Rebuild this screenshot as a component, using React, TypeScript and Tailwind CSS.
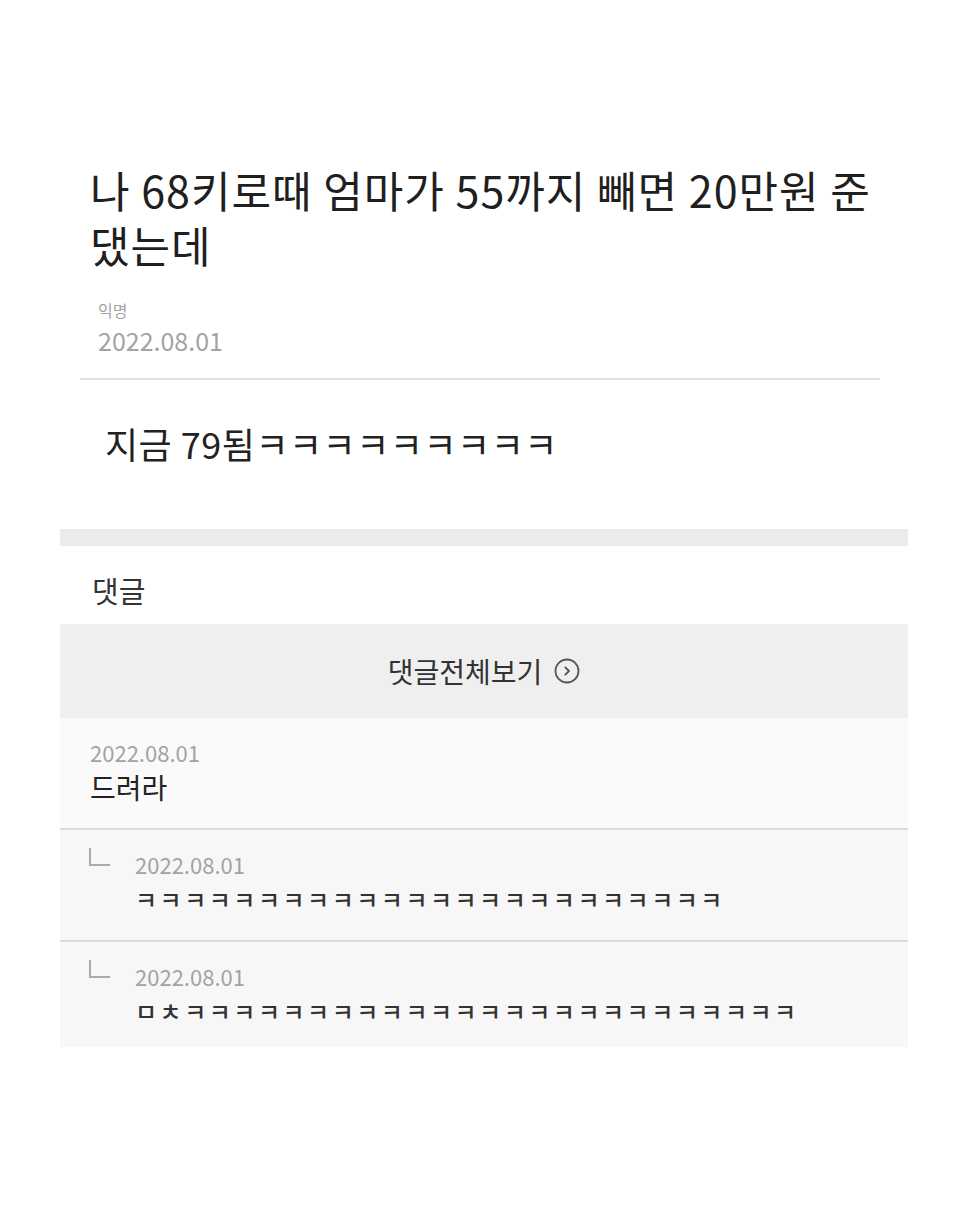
const KR = { fontFamily: '"Noto Sans CJK KR", "Noto Sans", sans-serif' };

function ChevronCircle() {
  return (
    <svg width="26" height="26" viewBox="0 0 26 26" fill="none" stroke="#555" strokeWidth="1.8">
      <circle cx="13" cy="13" r="11.5" />
      <path d="M11.3 9.3 L15 13 L11.3 16.7" strokeLinecap="round" strokeLinejoin="round" />
    </svg>
  );
}

function Reply({ date, text, h }: { date: string; text: string; h: string }) {
  return (
    <div className={`flex bg-[#f7f7f7] pl-[29px] ${h}`}>
      <div className="mt-[18px] h-[18px] w-[21px] border-b-2 border-l-2 border-[#ababab]" />
      <div className="ml-[25px] pt-[22px]">
        <div className="text-[22px] leading-[24px] text-[#a3a3a3]">{date}</div>
        <div className="mt-[8px] text-[24px] font-medium leading-[30px] tracking-[2.5px] text-[#333]">{text}</div>
      </div>
    </div>
  );
}

export default function App() {
  return (
    <div className="min-h-[1207px] bg-white" style={KR}>
      <div className="ml-[60px] w-[848px]">
        <div className="px-[30px] pt-[162px]">
          <h1 className="text-[43px] font-normal leading-[55px] tracking-[1px] text-[#1f1f1f]">
            나 68키로때 엄마가 55까지 빼면 20만원 준 댔는데
          </h1>
          <div className="mt-[28px] pl-[8px] text-[16px] leading-[20px] text-[#a3a3a3]">익명</div>
          <div className="mt-[6px] pl-[8px] text-[25px] leading-[28px] text-[#a3a3a3]">2022.08.01</div>
        </div>
        <div className="ml-[20px] mt-[24px] h-[2px] w-[800px] bg-[#e2e2e2]" />
        <div className="mt-[43px] pl-[45px] text-[36px] leading-[40px] tracking-[0.5px] text-[#222]">
          지금 79됨ㅋㅋㅋㅋㅋㅋㅋㅋㅋ
        </div>
        <div className="mt-[66px] h-[17px] bg-[#ebebeb]" />
        <div className="mt-[28px] pl-[32px] text-[29px] leading-[32px] text-[#333]">댓글</div>
        <div className="mt-[18px]">
          <div className="flex h-[94px] items-center justify-center gap-[12px] bg-[#efefef]">
            <span className="text-[28px] leading-[32px] text-[#333]">댓글전체보기</span>
            <ChevronCircle />
          </div>
          <div className="h-[110px] bg-[#fafafa] pl-[30px] pt-[22px]">
            <div className="text-[22px] leading-[24px] text-[#a3a3a3]">2022.08.01</div>
            <div className="mt-[5px] text-[28px] leading-[36px] text-[#222]">드려라</div>
          </div>
          <div className="h-[2px] bg-[#dcdcdc]" />
          <Reply h="h-[110px]" date="2022.08.01" text="ㅋㅋㅋㅋㅋㅋㅋㅋㅋㅋㅋㅋㅋㅋㅋㅋㅋㅋㅋㅋㅋㅋㅋㅋ" />
          <div className="h-[2px] bg-[#dcdcdc]" />
          <Reply h="h-[105px]" date="2022.08.01" text="ㅁㅊㅋㅋㅋㅋㅋㅋㅋㅋㅋㅋㅋㅋㅋㅋㅋㅋㅋㅋㅋㅋㅋㅋㅋㅋㅋ" />
        </div>
      </div>
    </div>
  );
}
